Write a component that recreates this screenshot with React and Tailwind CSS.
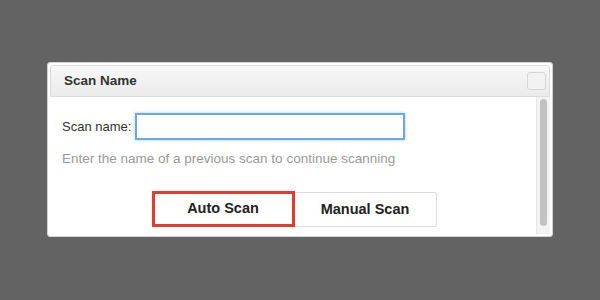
export default function App() {
  return (
    <div
      className="w-[600px] h-[300px] bg-[#636363] pt-[62px] pl-[47px]"
      style={{ fontFamily: '"Liberation Sans", Arial, sans-serif' }}
    >
      <div className="w-[506px] h-[175px] bg-white border border-[#d4d4d4] rounded-[3px] p-[2px] flex flex-col">
        {/* Header */}
        <div className="h-[32px] shrink-0 flex items-center justify-between pl-[13px] pr-[3px] border border-[#dcdcdc] rounded-t-[3px] bg-gradient-to-b from-[#f8f8f8] to-[#ebebeb]">
          <span className="text-[13.5px] font-bold text-[#333]">Scan Name</span>
          <div className="w-[19px] h-[18px] rounded-[3px] border border-[#d6d6d6] bg-[#f2f2f2]" />
        </div>

        {/* Body */}
        <div className="flex-1 flex min-h-0">
          <div className="flex-1 pl-[12px] pt-[16px]">
            <div className="flex items-center gap-[4px]">
              <label className="text-[13px] text-[#333]">Scan name:</label>
              <input
                type="text"
                className="w-[270px] h-[27px] border-2 border-[#6aa8e8] outline-none shadow-[0_0_3px_rgba(102,175,233,0.6)] px-2 text-[13px]"
              />
            </div>
            <p className="mt-[11px] text-[13.5px] leading-[16px] text-[#9a9a9a]">
              Enter the name of a previous scan to continue scanning
            </p>
            <div className="mt-[24px] flex justify-center pr-[10px]">
              <button className="w-[143px] h-[36px] border-[3px] border-[#e53b2f] bg-white text-[14.5px] font-bold text-[#222]">
                Auto Scan
              </button>
              <button className="w-[142px] h-[35px] mt-[1px] border border-[#dcdcdc] border-l-0 rounded-r-[3px] bg-white text-[14.5px] font-bold text-[#222]">
                Manual Scan
              </button>
            </div>
          </div>

          {/* Scrollbar */}
          <div className="w-[14px] bg-[#f3f3f3] border-l border-[#e8e8e8] pt-[2px] pb-[8px] pl-[3px]">
            <div className="w-[7px] h-full rounded-full bg-[#c2c2c2]" />
          </div>
        </div>
      </div>
    </div>
  );
}
